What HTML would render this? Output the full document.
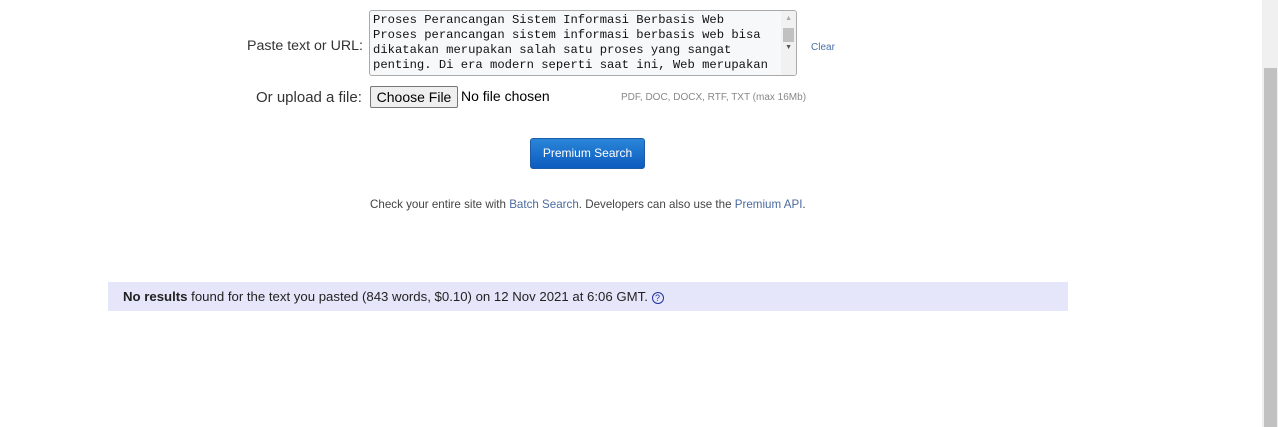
<!DOCTYPE html>
<html><head><style>
body{margin:0;width:1278px;height:427px;background:#fff;position:relative;overflow:hidden;font-family:"Liberation Sans",sans-serif}
.a{position:absolute;white-space:nowrap}
</style></head><body>
<div class="a" style="left:247px;top:38px;font-size:14.2px;color:#333">Paste text or URL:</div>
<div class="a" style="left:369px;top:10px;width:426px;height:64px;border:1px solid #aaa;border-radius:3px;background:#f7f8fa;overflow:hidden">
<div style="position:absolute;left:3px;top:2px;font-family:'Liberation Mono',monospace;font-size:12.2px;line-height:15px;color:#111;white-space:pre">Proses Perancangan Sistem Informasi Berbasis Web
Proses perancangan sistem informasi berbasis web bisa
dikatakan merupakan salah satu proses yang sangat
penting. Di era modern seperti saat ini, Web merupakan</div>
<div style="position:absolute;right:0;top:0;width:15px;height:64px;background:#f1f1f1"></div>
<div style="position:absolute;right:2px;top:17px;width:11px;height:14px;background:#c1c1c1"></div>
<div style="position:absolute;right:4px;top:4px;font-size:7px;color:#aaa">▲</div>
<div style="position:absolute;right:4px;top:33px;font-size:7px;color:#555">▼</div>
</div>
<div class="a" style="left:811px;top:42px;font-size:10px;color:#4a6ea8">Clear</div>
<div class="a" style="left:256px;top:89px;font-size:15px;color:#333">Or upload a file:</div>
<div class="a" style="left:370px;top:86px;width:86px;height:20px;border:1px solid #767676;border-radius:2px;background:#efefef;font-size:14px;line-height:20px;text-align:center;color:#000">Choose File</div>
<div class="a" style="left:461px;top:88px;font-size:14px;color:#000">No file chosen</div>
<div class="a" style="left:621px;top:92px;font-size:10px;color:#888">PDF, DOC, DOCX, RTF, TXT (max 16Mb)</div>
<div class="a" style="left:530px;top:138px;width:113px;height:29px;border:1px solid #1d5aa8;border-radius:3px;background:linear-gradient(#2a86d8,#0d5bbf);color:#fff;font-size:12px;line-height:29px;text-align:center">Premium Search</div>
<div class="a" style="left:370px;top:198px;font-size:11.6px;color:#444">Check your entire site with <span style="color:#4a6a9e">Batch Search</span>. Developers can also use the <span style="color:#4a6a9e">Premium API</span>.</div>
<div class="a" style="left:108px;top:282px;width:960px;height:29px;background:#e6e6fa"></div>
<div class="a" style="left:123px;top:289px;font-size:13.2px;color:#222"><b>No results</b> found for the text you pasted (843 words, $0.10) on 12 Nov 2021 at 6:06 GMT. <span style="display:inline-block;width:10px;height:10px;border:1px solid #223399;border-radius:50%;font-size:9px;line-height:10px;text-align:center;color:#223399">?</span></div>
<div class="a" style="left:1262px;top:0;width:16px;height:427px;background:#f0f0f0"></div>
<div class="a" style="left:1264px;top:68px;width:13px;height:359px;background:#c1c1c1"></div>
</body></html>
